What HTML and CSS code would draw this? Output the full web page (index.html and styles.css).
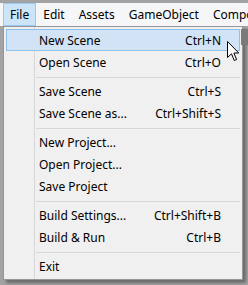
FILE: index.html
```html
<!DOCTYPE html>
<html lang="en">
<head>
    <meta charset="UTF-8">
    <meta name="viewport" content="width=device-width, initial-scale=1.0">
    <title>File Menu</title>
    <link rel="stylesheet" href="styles.css">
</head>
<body>
    <div class="menubar">
        <span class="menubar-item active">File</span>
        <span class="menubar-item">Edit</span>
        <span class="menubar-item">Assets</span>
        <span class="menubar-item">GameObject</span>
        <span class="menubar-item">Component</span>
    </div>

    <div class="dropdown">
        <div class="menu-item hover"><span>New Scene</span><span class="shortcut">Ctrl+N</span></div>
        <div class="menu-item"><span>Open Scene</span><span class="shortcut">Ctrl+O</span></div>
        <div class="separator"></div>
        <div class="menu-item"><span>Save Scene</span><span class="shortcut">Ctrl+S</span></div>
        <div class="menu-item"><span>Save Scene as...</span><span class="shortcut">Ctrl+Shift+S</span></div>
        <div class="separator"></div>
        <div class="menu-item"><span>New Project...</span></div>
        <div class="menu-item"><span>Open Project...</span></div>
        <div class="menu-item"><span>Save Project</span></div>
        <div class="separator"></div>
        <div class="menu-item"><span>Build Settings...</span><span class="shortcut">Ctrl+Shift+B</span></div>
        <div class="menu-item"><span>Build &amp; Run</span><span class="shortcut">Ctrl+B</span></div>
        <div class="separator"></div>
        <div class="menu-item"><span>Exit</span></div>
    </div>

    <div class="toolbar-bit"></div>

    <!-- mouse pointer over the menu -->
    <svg class="cursor" width="13" height="21" viewBox="0 0 13 21">
        <path d="M0.5 0.5 L0.5 16.5 L4.5 12.8 L7.3 19.5 L9.6 18.5 L6.9 12 L11.8 12 Z" fill="#fff" stroke="#000" stroke-width="1"/>
    </svg>
</body>
</html>
```

FILE: styles.css
```css
body {
    margin: 0;
    background-color: #a3a3a3;
    font-family: "Noto Sans", "Open Sans", sans-serif;
    font-size: 12px;
    color: #000;
    position: relative;
    height: 285px;
    overflow: hidden;
}

.menubar {
    margin-top: 3px;
    height: 23px;
    display: flex;
    padding-left: 3px;
    background-color: #f5f6f7;
    white-space: nowrap;
    overflow: hidden;
}

.menubar-item {
    padding: 0 6px;
    line-height: 21px;
    border: 1px solid transparent;
}

.menubar-item.active {
    background-color: #cce4f7;
    border-color: #99c9ef;
}

.dropdown {
    width: 234px;
    margin-left: 3px;
    padding: 2px;
    border: 1px solid #979797;
    background-color: #f0f0f0;
    background-image: linear-gradient(to right, transparent 30px, #d7d7d7 30px, #d7d7d7 31px, transparent 31px);
    box-shadow: 3px 3px 3px rgba(0, 0, 0, 0.35);
}

.menu-item {
    display: flex;
    justify-content: space-between;
    align-items: center;
    height: 20px;
    padding: 0 18px 0 32px;
    border: 1px solid transparent;
}

.menu-item.hover {
    background-color: #d1e3f4;
    border-color: #8fbfeb;
}

.separator {
    height: 1px;
    margin: 4px 0 2px 30px;
    background-color: #d7d7d7;
}

.toolbar-bit {
    position: absolute;
    left: 241px;
    top: 29px;
    width: 7px;
    height: 16px;
    background-color: #7a7a7a;
}

.cursor {
    position: absolute;
    left: 227px;
    top: 41px;
}
```
